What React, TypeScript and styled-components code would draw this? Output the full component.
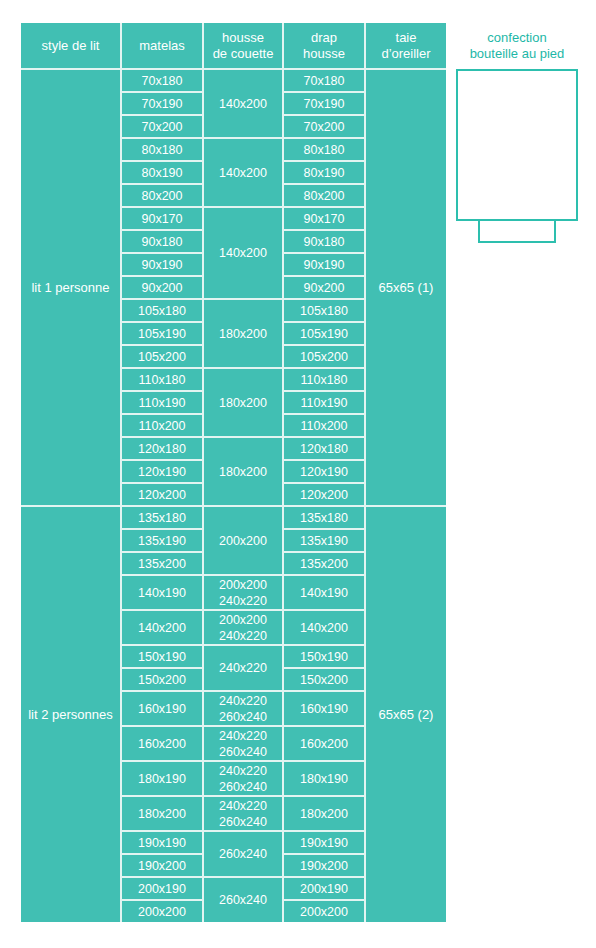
import styled, { createGlobalStyle } from 'styled-components';

const GlobalStyle = createGlobalStyle`
  body {
    margin: 0;
    background: #ffffff;
    font-family: 'Liberation Sans', Arial, sans-serif;
  }
`;

type Group = { housse: string[]; sizes: string[]; tall?: boolean };
type Section = { style: string; taie: string; groups: Group[] };

const sections: Section[] = [
  {
    style: 'lit 1 personne',
    taie: '65x65 (1)',
    groups: [
      { housse: ['140x200'], sizes: ['70x180', '70x190', '70x200'] },
      { housse: ['140x200'], sizes: ['80x180', '80x190', '80x200'] },
      { housse: ['140x200'], sizes: ['90x170', '90x180', '90x190', '90x200'] },
      { housse: ['180x200'], sizes: ['105x180', '105x190', '105x200'] },
      { housse: ['180x200'], sizes: ['110x180', '110x190', '110x200'] },
      { housse: ['180x200'], sizes: ['120x180', '120x190', '120x200'] },
    ],
  },
  {
    style: 'lit 2 personnes',
    taie: '65x65 (2)',
    groups: [
      { housse: ['200x200'], sizes: ['135x180', '135x190', '135x200'] },
      { housse: ['200x200', '240x220'], sizes: ['140x190'], tall: true },
      { housse: ['200x200', '240x220'], sizes: ['140x200'], tall: true },
      { housse: ['240x220'], sizes: ['150x190', '150x200'] },
      { housse: ['240x220', '260x240'], sizes: ['160x190'], tall: true },
      { housse: ['240x220', '260x240'], sizes: ['160x200'], tall: true },
      { housse: ['240x220', '260x240'], sizes: ['180x190'], tall: true },
      { housse: ['240x220', '260x240'], sizes: ['180x200'], tall: true },
      { housse: ['260x240'], sizes: ['190x190', '190x200'] },
      { housse: ['260x240'], sizes: ['200x190', '200x200'] },
    ],
  },
];

const Page = styled.div`
  display: flex;
  align-items: flex-start;
  gap: 10px;
  padding: 23px 0 0 21px;
`;

const Table = styled.div<{ $rows: string }>`
  display: grid;
  grid-template-columns: 99px 80px 78px 80px 80px;
  grid-template-rows: ${(p) => p.$rows};
  gap: 2px;
  background: #e2f4f1;
  width: 425px;
`;

const Cell = styled.div<{ $row: number; $span?: number; $col: number; $head?: boolean }>`
  grid-row: ${(p) => p.$row} / span ${(p) => p.$span ?? 1};
  grid-column: ${(p) => p.$col};
  background: #41bfb3;
  color: #ffffff;
  display: flex;
  flex-direction: column;
  align-items: center;
  justify-content: center;
  text-align: center;
  font-size: ${(p) => (p.$head ? '13px' : '12.5px')};
  line-height: 16px;
`;

const Panel = styled.div`
  width: 122px;
  display: flex;
  flex-direction: column;
  align-items: center;
`;

const Title = styled.div`
  height: 46px;
  display: flex;
  align-items: center;
  justify-content: center;
  text-align: center;
  color: #1db7a7;
  font-size: 13px;
  line-height: 16px;
`;

const Sheet = styled.div`
  box-sizing: border-box;
  width: 122px;
  height: 152px;
  border: 2px solid #2dbfae;
`;

const Foot = styled.div`
  box-sizing: border-box;
  width: 78px;
  height: 22px;
  border: 2px solid #2dbfae;
  border-top: none;
`;

function App() {
  const heights: number[] = [45];
  const cells: JSX.Element[] = [];
  const headers = ['style de lit', 'matelas', 'housse\nde couette', 'drap\nhousse', 'taie\nd\u2019oreiller'];
  headers.forEach((h, i) =>
    cells.push(
      <Cell key={`h${i}`} $row={1} $col={i + 1} $head>
        {h.split('\n').map((l) => (
          <span key={l}>{l}</span>
        ))}
      </Cell>
    )
  );

  let row = 2;
  sections.forEach((s, si) => {
    const start = row;
    s.groups.forEach((g, gi) => {
      const gStart = row;
      g.sizes.forEach((size) => {
        heights.push(g.tall ? 33 : 21);
        cells.push(
          <Cell key={`m${size}`} $row={row} $col={2}>
            {size}
          </Cell>,
          <Cell key={`d${size}`} $row={row} $col={4}>
            {size}
          </Cell>
        );
        row++;
      });
      cells.push(
        <Cell key={`c${si}-${gi}`} $row={gStart} $span={g.sizes.length} $col={3}>
          {g.housse.map((l) => (
            <span key={l}>{l}</span>
          ))}
        </Cell>
      );
    });
    cells.push(
      <Cell key={`s${si}`} $row={start} $span={row - start} $col={1} $head>
        {s.style}
      </Cell>,
      <Cell key={`t${si}`} $row={start} $span={row - start} $col={5} $head>
        {s.taie}
      </Cell>
    );
  });

  return (
    <>
      <GlobalStyle />
      <Page>
        <Table $rows={heights.map((h) => `${h}px`).join(' ')}>{cells}</Table>
        <Panel>
          <Title>
            confection
            <br />
            bouteille au pied
          </Title>
          <Sheet />
          <Foot />
        </Panel>
      </Page>
    </>
  );
}

export default App;
